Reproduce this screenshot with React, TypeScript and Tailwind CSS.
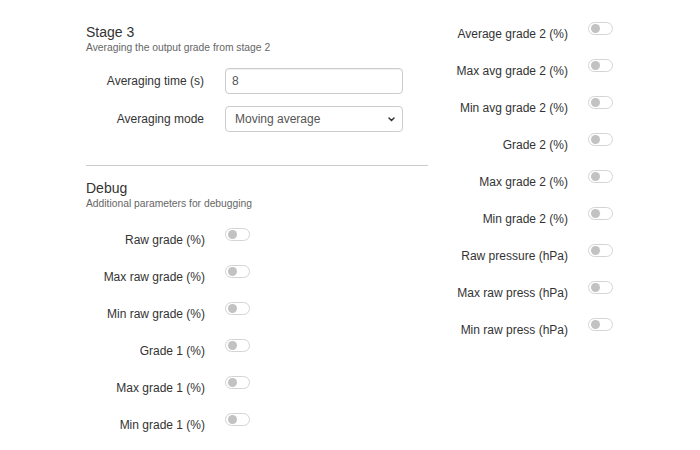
const font = { fontFamily: '"Liberation Sans", Arial, sans-serif' };

const debugLeft = [
  "Raw grade (%)",
  "Max raw grade (%)",
  "Min raw grade (%)",
  "Grade 1 (%)",
  "Max grade 1 (%)",
  "Min grade 1 (%)",
];

const debugRight = [
  "Average grade 2 (%)",
  "Max avg grade 2 (%)",
  "Min avg grade 2 (%)",
  "Grade 2 (%)",
  "Max grade 2 (%)",
  "Min grade 2 (%)",
  "Raw pressure (hPa)",
  "Max raw press (hPa)",
  "Min raw press (hPa)",
];

const Toggle = () => (
  <span className="flex h-[13px] w-[25px] shrink-0 items-center rounded-full border border-[#d4d4d4] bg-white pl-[2px]">
    <span className="h-[9px] w-[9px] rounded-full bg-[#c2c2c2]" />
  </span>
);

const ToggleRow = ({ label, labelWidth }: { label: string; labelWidth: string }) => (
  <div className="flex h-[37px] items-start gap-[20px]">
    <span className={`${labelWidth} pt-1 text-right text-[12px] leading-4 text-[#333]`}>
      {label}
    </span>
    <Toggle />
  </div>
);

const SectionHead = ({ title, sub }: { title: string; sub: string }) => (
  <div>
    <h3 className="text-[14px] leading-4 text-[#333]">{title}</h3>
    <p className="pt-px text-[10.3px] leading-[14px] text-[#666]">{sub}</p>
  </div>
);

export default function App() {
  return (
    <div className="flex h-[450px] w-[700px] gap-3 bg-white pl-[86px]" style={font}>
      <div className="flex w-[342px] flex-col pt-6">
        <SectionHead title="Stage 3" sub="Averaging the output grade from stage 2" />
        <div className="mt-[13px] flex flex-col gap-3">
          <div className="flex items-center gap-[21px]">
            <label className="w-[118px] text-right text-[12px] leading-4 text-[#333]">
              Averaging time (s)
            </label>
            <input
              defaultValue="8"
              className="h-[26px] w-[178px] rounded border border-[#ccc] px-[6px] text-[12px] text-[#555] shadow-[inset_0_1px_1px_rgba(0,0,0,0.06)] outline-none"
            />
          </div>
          <div className="flex items-center gap-[21px]">
            <label className="w-[118px] text-right text-[12px] leading-4 text-[#333]">
              Averaging mode
            </label>
            <div className="relative h-[26px] w-[178px]">
              <select className="h-full w-full appearance-none rounded border border-[#ccc] bg-white pl-[9px] text-[12px] text-[#555] outline-none">
                <option>Moving average</option>
              </select>
              <svg
                className="pointer-events-none absolute right-[8px] top-[11px]"
                width="7"
                height="5"
                viewBox="0 0 7 5"
                fill="none"
              >
                <path d="M1 1l2.5 2.5L6 1" stroke="#333" strokeWidth="1.5" strokeLinecap="round" />
              </svg>
            </div>
          </div>
        </div>
        <hr className="mt-[33px] border-t border-[#ccc]" />
        <div className="mt-[14px]">
          <SectionHead title="Debug" sub="Additional parameters for debugging" />
        </div>
        <div className="mt-[17px] flex flex-col">
          {debugLeft.map((l) => (
            <ToggleRow key={l} label={l} labelWidth="w-[119px]" />
          ))}
        </div>
      </div>
      <div className="flex flex-col pt-[22px]">
        {debugRight.map((l) => (
          <ToggleRow key={l} label={l} labelWidth="w-[128px]" />
        ))}
      </div>
    </div>
  );
}
